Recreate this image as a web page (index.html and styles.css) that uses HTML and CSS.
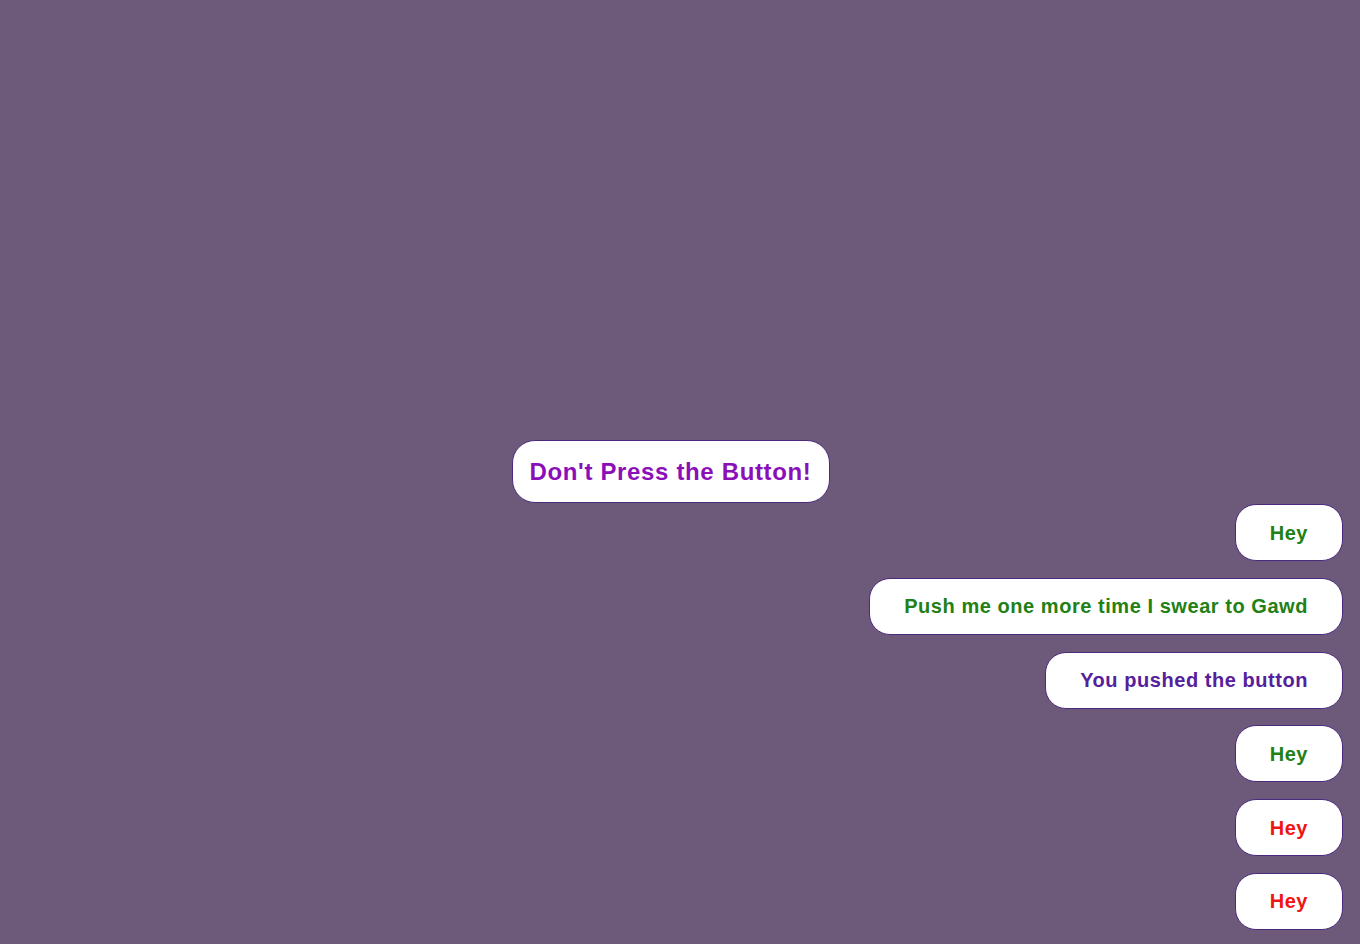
FILE: index.html
```html
<!DOCTYPE html>
<html lang="en">
<head>
<meta charset="utf-8">
<title>Don't Press the Button</title>
<link rel="stylesheet" href="styles.css">
</head>
<body>
<main class="page">
  <div class="title-row">
    <button class="big-button" type="button">Don't Press the Button!</button>
  </div>
  <ul class="messages">
    <li class="bubble green">Hey</li>
    <li class="bubble green">Push me one more time I swear to Gawd</li>
    <li class="bubble purple">You pushed the button</li>
    <li class="bubble green">Hey</li>
    <li class="bubble red">Hey</li>
    <li class="bubble red">Hey</li>
  </ul>
</main>
</body>
</html>
```

FILE: styles.css
```css
html, body {
  margin: 0;
  padding: 0;
  height: 100%;
  overflow: hidden;
}

body {
  background: #6d5a7b;
  font-family: "Liberation Sans", Arial, Helvetica, sans-serif;
}

.page {
  display: flex;
  flex-direction: column;
  padding: 440px 17px 0 0;
}

.title-row {
  display: flex;
  justify-content: center;
  padding-right: 2px;
}

.big-button {
  box-sizing: border-box;
  height: 63px;
  padding: 0 17px 0 17px;
  border: 1px solid #4b2a7e;
  border-radius: 23px;
  background: #ffffff;
  color: #8a0fb8;
  font-family: inherit;
  font-size: 24px;
  font-weight: bold;
  letter-spacing: 0.65px;
  cursor: pointer;
}

.messages {
  list-style: none;
  margin: 1px 0 0 0;
  padding: 0;
  display: flex;
  flex-direction: column;
  align-items: flex-end;
  gap: 16.8px;
}

.bubble {
  box-sizing: border-box;
  height: 57px;
  display: flex;
  align-items: center;
  padding: 1px 34px 0 34px;
  background: #ffffff;
  border: 1px solid #4b2a7e;
  border-radius: 21px;
  font-size: 20px;
  font-weight: bold;
  letter-spacing: 0.55px;
}

.green { color: #228014; }
.purple { color: #55209c; }
.red { color: #f01414; }
```
